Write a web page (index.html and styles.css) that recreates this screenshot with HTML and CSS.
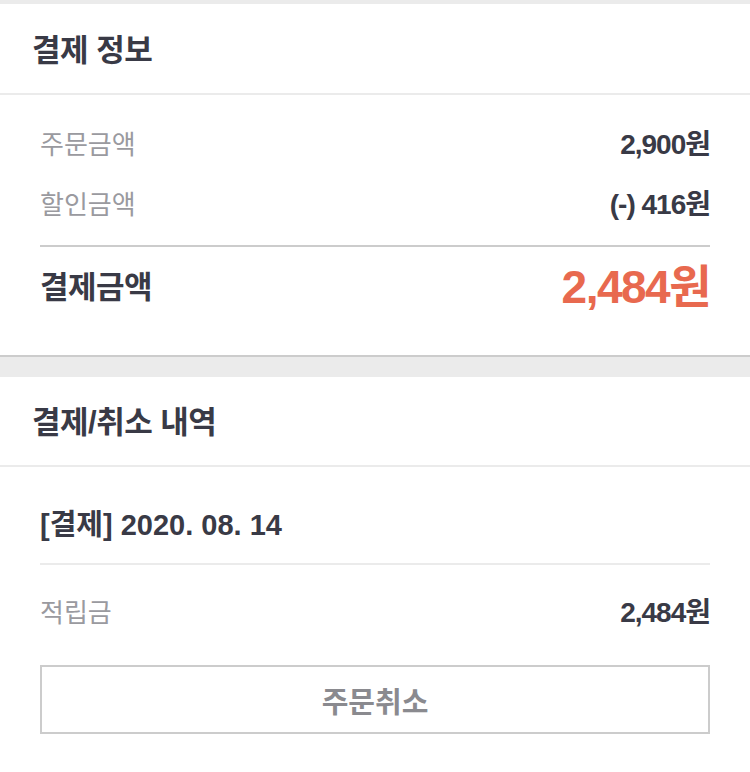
FILE: index.html
```html
<!DOCTYPE html>
<html lang="ko">
<head>
<meta charset="utf-8">
<link rel="stylesheet" href="styles.css">
</head>
<body>
<div class="band band-top"></div>
<section class="section section-pay">
  <header class="sec-head"><h2 class="sec-title">결제 정보</h2></header>
  <div class="sec-body">
    <div class="row">
      <span class="label">주문금액</span>
      <span class="value">2,900원</span>
    </div>
    <div class="row">
      <span class="label">할인금액</span>
      <span class="value">(-) 416원</span>
    </div>
    <div class="total">
      <span class="total-label">결제금액</span>
      <span class="total-value">2,484원</span>
    </div>
  </div>
</section>
<div class="band band-mid"></div>
<section class="section section-history">
  <header class="sec-head"><h2 class="sec-title">결제/취소 내역</h2></header>
  <div class="sec-body">
    <div class="date-row">[결제] 2020. 08. 14</div>
    <div class="row row-point">
      <span class="label">적립금</span>
      <span class="value">2,484원</span>
    </div>
    <button class="cancel-btn" type="button">주문취소</button>
  </div>
</section>
</body>
</html>
```

FILE: styles.css
```css
* { box-sizing: border-box; }
html, body { margin: 0; padding: 0; background: #fff; }
body {
  font-family: "Liberation Sans", "Noto Sans CJK KR", sans-serif;
  color: #393a46;
  width: 750px;
}
.band { background: #ebebeb; }
.band-top { height: 4px; }
.band-mid { height: 20px; }

.sec-head {
  height: 91px;
  display: flex;
  align-items: center;
  padding: 3px 32px 0;
  border-bottom: 2px solid #ebebeb;
}
.section-history .sec-head { height: 90px; }
.sec-title {
  margin: 0;
  font-size: 31px;
  font-weight: 700;
  line-height: 1;
  letter-spacing: -0.5px;
}
.sec-body { padding: 20px 40px 0; }
.section-pay .sec-body { border-bottom: 2px solid #cccccc; padding-bottom: 28px; }

.row {
  height: 60px;
  display: flex;
  justify-content: space-between;
  align-items: center;
}
.label {
  font-size: 26px;
  line-height: 1;
  color: #9a9a9f;
  font-weight: 400;
}
.value {
  font-size: 28px;
  line-height: 1;
  font-weight: 700;
  letter-spacing: -1px;
}
.total {
  margin-top: 10px;
  border-top: 2px solid #cccccc;
  height: 82px;
  display: flex;
  justify-content: space-between;
  align-items: center;
}
.total-label {
  font-size: 31px;
  line-height: 1;
  font-weight: 700;
  letter-spacing: -0.5px;
}
.total-value {
  font-size: 46px;
  line-height: 1;
  font-weight: 700;
  color: #e8694f;
  letter-spacing: -1.5px;
}
.date-row {
  height: 78px;
  display: flex;
  align-items: center;
  font-size: 29px;
  line-height: 1;
  font-weight: 700;
  border-bottom: 2px solid #ebebeb;
}
.row-point { height: 96px; }
.cancel-btn {
  display: block;
  width: 100%;
  height: 69px;
  margin-top: 4px;
  background: #fff;
  border: 2px solid #cccccc;
  border-radius: 0;
  font-family: "Noto Sans CJK KR", sans-serif;
  font-size: 29px;
  font-weight: 700;
  color: #8a8a8f;
  padding: 0;
}
```
